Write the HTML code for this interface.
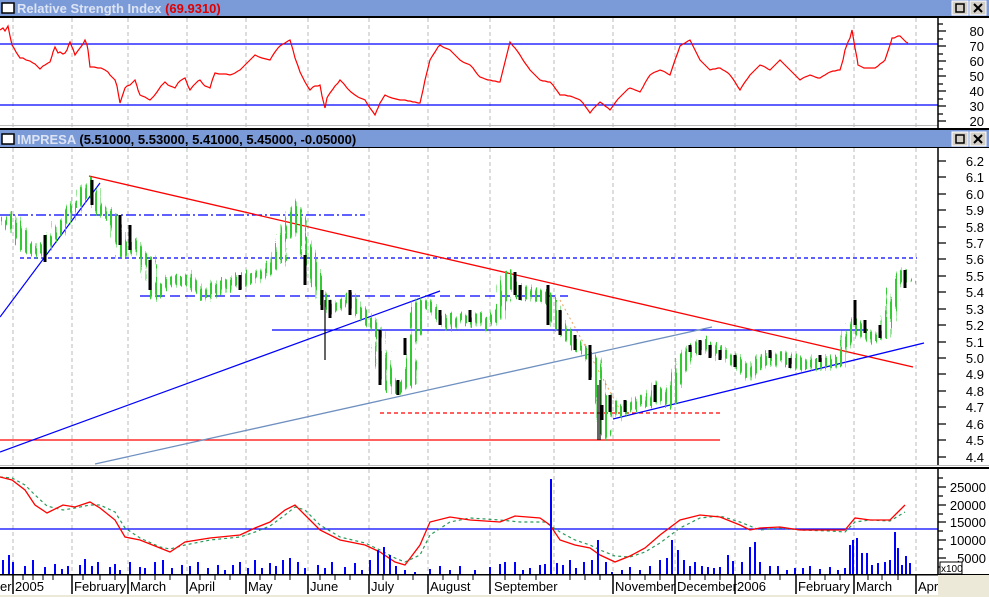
<!DOCTYPE html>
<html><head><meta charset="utf-8"><style>
html,body{margin:0;padding:0;background:#fff;}
body{width:989px;height:597px;overflow:hidden;position:relative;font-family:"Liberation Sans",sans-serif;}
svg{position:absolute;left:0;top:0;}
</style></head><body>
<svg width="989" height="597" viewBox="0 0 989 597" xmlns="http://www.w3.org/2000/svg" font-family="Liberation Sans, sans-serif">
<defs>
<pattern id="stripes" width="5" height="10" patternUnits="userSpaceOnUse"><rect x="0" y="0" width="2" height="10" fill="#fff"/></pattern>
<mask id="m"><rect x="0" y="148" width="938" height="317" fill="url(#stripes)"/></mask>
<filter id="jag" x="-5%" y="-20%" width="110%" height="140%">
<feTurbulence type="turbulence" baseFrequency="0.35 0.03" numOctaves="2" seed="3" result="t"/>
<feDisplacementMap in="SourceGraphic" in2="t" scale="14" xChannelSelector="B" yChannelSelector="R"/>
</filter>
</defs>
<rect x="0" y="0" width="989" height="597" fill="#fff"/>
<rect x="0" y="0" width="989" height="16" fill="#7b9ad8"/>
<rect x="2" y="3" width="12" height="10" fill="#fff" stroke="#000" stroke-width="1.5"/>
<text x="17" y="13" font-size="13" font-weight="bold" fill="#dce4f4">Relative Strength Index <tspan fill="#e00000">(69.9310)</tspan></text>
<rect x="0" y="128" width="989" height="2" fill="#000"/>
<rect x="0" y="130" width="989" height="17" fill="#7b9ad8"/>
<rect x="2" y="134" width="12" height="10" fill="#fff" stroke="#000" stroke-width="1.5"/>
<text x="17" y="144" font-size="13" font-weight="bold" fill="#dce4f4">IMPRESA <tspan fill="#000">(5.51000, 5.53000, 5.41000, 5.45000, -0.05000)</tspan></text>
<g>
<rect x="952" y="1" width="16" height="14" fill="#d4d0c8" stroke="#fff"/><rect x="956" y="4" width="8" height="8" fill="none" stroke="#000" stroke-width="1.5"/>
<rect x="970" y="1" width="16" height="14" fill="#d4d0c8" stroke="#fff"/><path d="M974 4 L982 12 M982 4 L974 12" stroke="#000" stroke-width="2"/>
<rect x="952" y="132" width="16" height="14" fill="#d4d0c8" stroke="#fff"/><rect x="956" y="135" width="8" height="8" fill="none" stroke="#000" stroke-width="1.5"/>
<rect x="970" y="132" width="16" height="14" fill="#d4d0c8" stroke="#fff"/><path d="M974 135 L982 143 M982 135 L974 143" stroke="#000" stroke-width="2"/>
</g>
<rect x="0" y="16" width="989" height="2" fill="#000"/>
<rect x="0" y="147" width="989" height="1" fill="#000"/>
<rect x="0" y="465" width="989" height="1" fill="#bbb"/>
<rect x="0" y="467" width="989" height="2" fill="#000"/>
<rect x="0" y="125" width="989" height="1" fill="#bbb"/>
<g stroke="#bbb" stroke-dasharray="4,3" stroke-width="1">
<path d="M13 18V128M72 18V128M128 18V128M187 18V128M246 18V128M308 18V128M369 18V128M428 18V128M490 18V128M554 18V128M613 18V128M675 18V128M735 18V128M796 18V128M854 18V128M916 18V128"/>
<path d="M13 148V465M72 148V465M128 148V465M187 148V465M246 148V465M308 148V465M369 148V465M428 148V465M490 148V465M554 148V465M613 148V465M675 148V465M735 148V465M796 148V465M854 148V465M916 148V465"/>
<path d="M13 469V574M72 469V574M128 469V574M187 469V574M246 469V574M308 469V574M369 469V574M428 469V574M490 469V574M554 469V574M613 469V574M675 469V574M735 469V574M796 469V574M854 469V574M916 469V574"/>
</g>
<path d="M0 44H938M0 105H938" stroke="#00f" stroke-width="1.3"/>
<polyline fill="none" stroke="#f00" stroke-width="1.2" points="0,30 3,28 5,31 8,26 10,36 12,45 14,48 16,52 18,55 20,58 23,58 26,60 30,61 33,63 35,64 37,66 40,69 43,66 45,65 48,63 50,62 52,56 53,52 55,47 57,51 58,53 60,52 63,54 65,53 67,50 69,44 70,42 72,47 73,49 75,55 77,52 80,48 83,44 85,40 87,45 88,50 90,67 94,67 98,68 101,68 105,70 108,72 110,75 113,78 115,80 117,86 118,92 120,103 122,97 123,94 125,88 127,86 130,85 133,82 135,80 137,86 138,90 140,95 142,96 145,97 148,99 150,100 154,96 157,92 161,86 165,82 168,85 170,86 173,87 175,88 178,83 180,81 183,79 185,78 187,83 188,86 190,90 193,86 195,84 198,81 200,80 203,84 205,86 208,87 210,88 212,81 213,78 215,73 219,74 222,74 226,74 230,75 233,74 235,73 238,71 240,70 244,66 248,62 252,58 255,55 259,57 262,58 266,59 270,60 273,55 275,52 278,48 280,46 283,44 285,43 288,41 290,40 293,50 295,58 298,66 300,72 303,78 305,82 308,87 310,90 313,87 315,86 318,86 320,85 322,96 325,108 327,98 328,96 330,93 333,89 335,86 338,83 340,80 344,84 347,88 351,92 355,95 358,97 360,98 363,99 365,100 368,105 370,108 373,112 375,115 377,110 378,108 380,103 382,100 383,98 385,95 389,97 392,98 396,99 400,100 403,100 405,100 408,101 410,101 413,102 415,102 418,103 420,103 423,90 425,80 428,68 430,60 433,55 435,52 438,47 440,45 443,47 445,48 448,49 450,50 453,53 455,55 458,58 460,60 463,62 465,63 468,64 470,65 473,68 475,71 478,75 480,77 483,78 485,79 488,80 490,80 493,81 495,81 498,82 500,82 503,70 505,62 508,50 510,42 513,46 515,48 518,52 520,55 523,60 525,63 528,67 530,70 533,73 535,75 538,78 540,80 543,81 545,81 548,82 550,82 553,85 555,88 558,92 560,95 563,95 565,95 568,96 570,96 573,97 575,98 578,99 580,100 583,103 585,106 588,110 590,113 593,109 595,107 598,104 600,102 603,104 605,106 608,108 610,110 613,106 615,103 618,99 620,97 623,94 625,92 628,89 630,88 633,89 635,90 638,91 640,92 643,87 645,83 648,78 650,75 653,73 655,72 658,71 660,70 663,71 665,72 668,74 670,75 673,66 675,60 678,52 680,46 683,44 685,43 688,41 690,40 693,46 695,50 698,56 700,60 703,63 705,65 708,68 710,70 713,69 715,69 718,68 720,68 723,70 725,71 728,73 730,75 733,79 735,82 738,87 740,90 743,85 745,82 748,78 750,75 753,72 755,70 758,67 760,65 763,66 765,67 768,69 770,70 773,67 775,65 778,62 780,60 783,63 785,65 788,68 790,70 793,73 795,75 798,78 800,80 803,78 805,77 808,76 810,75 813,76 815,77 818,78 820,78 823,76 825,75 828,73 830,72 833,71 835,71 838,70 840,70 843,60 845,50 848,42 850,38 852,30 854,42 855,48 857,58 858,65 860,66 862,67 864,68 865,68 868,68 870,68 873,68 875,68 878,66 880,64 883,62 885,60 887,54 889,48 891,42 892,38 894,38 896,37 898,36 900,36 902,38 904,40 906,42 908,43"/>
<path d="M20 258H917" stroke="#00f" stroke-width="1.2" stroke-dasharray="4,3"/>
<path d="M0 215H365" stroke="#00f" stroke-width="1.2" stroke-dasharray="10,3,2,3"/>
<path d="M140 296H568" stroke="#00f" stroke-width="1.2" stroke-dasharray="10,5"/>
<path d="M272 330H868" stroke="#00f" stroke-width="1.3"/>
<path d="M0 440H720" stroke="#f00" stroke-width="1.3"/>
<path d="M380 413H720" stroke="#f00" stroke-width="1.2" stroke-dasharray="4,3"/>
<path d="M89 176L913 367" stroke="#f00" stroke-width="1.3"/>
<path d="M0 317L100 183" stroke="#00f" stroke-width="1.2"/>
<path d="M0 452L440 291" stroke="#00f" stroke-width="1.2"/>
<path d="M95 464L712 327" stroke="#6f90c0" stroke-width="1.3"/>
<path d="M613 419L924 343" stroke="#00f" stroke-width="1.3"/>
<path d="M560 300L620 410" stroke="#f0a060" stroke-width="1" stroke-dasharray="2,3"/>
<g mask="url(#m)">
<polyline filter="url(#jag)" fill="none" stroke="#3c3" stroke-width="11" stroke-linejoin="round" points="0,225 10,215 20,240 35,250 50,235 70,205 88,180 95,205 110,215 120,250 130,240 145,255 150,290 165,280 185,275 200,290 215,285 230,280 245,275 260,270 275,255 285,225 292,205 300,240 310,265 320,300 330,305 345,295 360,310 375,330 385,380 395,385 405,380 410,340 415,300 425,300 435,310 445,320 460,315 480,320 495,310 505,270 515,290 530,290 545,295 555,320 570,340 590,355 595,380 600,430 605,395 615,410 630,400 645,400 655,385 665,400 680,355 700,340 715,350 730,355 745,370 760,355 780,355 800,360 820,360 840,355 850,320 860,330 870,335 880,330 890,300 895,280 900,270 905,280"/>
</g>
<g stroke="#000" stroke-width="3">
<path d="M45 235V262M92 180V205M120 215V245M130 225V250M150 260V290M305 255V285M322 290V310M350 290V315M380 330V385M398 380V395M405 338V355M515 272V295M548 285V325M560 310V335M575 335V350M590 345V380M602 405V420M610 395V412M655 385V402M700 340V355M710 345V358M735 355V367M770 350V358M855 300V325M865 320V333M880 325V338M905 270V288M240 275V290M330 300V318M440 310V325M470 310V322M520 285V300M625 400V412M690 345V352M720 350V360M790 358V368M820 355V362"/>
</g>
<g stroke="#000" stroke-width="1.2"><path d="M600 380V440M325 300V360M598 385V440"/></g>
<path d="M0 529H938" stroke="#00f" stroke-width="1.3"/>
<polyline fill="none" stroke="#2a9a5a" stroke-width="1.2" stroke-dasharray="3,3" points="0,477 12,478 25,485 35,495 47,506 63,510 75,508 90,505 100,505 115,512 125,528 140,538 160,547 170,549 185,545 210,540 240,537 255,532 270,526 285,515 295,507 305,510 320,525 340,537 365,543 380,550 395,558 405,562 420,555 430,535 450,522 470,518 500,520 520,522 545,522 560,532 575,540 590,545 600,550 615,556 630,557 645,552 660,543 680,528 700,518 720,516 740,522 750,526 760,530 780,528 800,530 830,531 845,532 855,522 870,520 890,521 900,515 905,512"/>
<polyline fill="none" stroke="#f00" stroke-width="1.3" points="0,477 12,480 25,490 35,505 47,513 63,505 75,507 90,502 100,508 115,520 125,537 140,540 160,548 170,552 185,542 210,538 240,535 255,528 270,522 285,510 295,505 305,515 320,530 340,540 365,545 380,552 395,562 405,565 420,545 430,522 450,517 470,520 500,522 515,516 540,518 550,525 560,540 575,545 590,548 600,555 615,562 630,556 645,548 660,535 680,520 700,515 720,517 740,525 750,530 760,528 780,527 800,530 830,530 845,530 855,518 870,520 890,520 900,510 905,505"/>
<path stroke="#00f" stroke-width="2" d="M3 574V560M9 574V555M13 574V562M25 574V566M33 574V560M45 574V567M55 574V564M62 574V569M68 574V566M80 574V565M85 574V559M92 574V566M98 574V562M110 574V567M115 574V564M120 574V570M130 574V562M140 574V567M145 574V568M155 574V562M163 574V560M172 574V568M182 574V565M190 574V566M198 574V562M208 574V568M218 574V565M225 574V570M233 574V565M240 574V562M248 574V568M255 574V560M262 574V568M270 574V563M276 574V566M283 574V560M290 574V558M298 574V562M305 574V568M318 574V565M325 574V568M332 574V562M345 574V567M355 574V563M362 574V570M370 574V560M378 574V550M384 574V547M390 574V555M396 574V566M405 574V570M415 574V572M430 574V569M440 574V566M450 574V570M460 574V566M475 574V570M490 574V567M500 574V564M505 574V562M515 574V562M523 574V570M530 574V568M540 574V565M545 574V564M551 574V479M557 574V563M563 574V565M570 574V560M576 574V568M584 574V562M592 574V560M598 574V540M606 574V562M612 574V572M622 574V570M630 574V567M640 574V570M650 574V566M660 574V560M667 574V558M672 574V540M678 574V550M684 574V560M690 574V566M695 574V562M702 574V566M708 574V567M714 574V568M720 574V567M728 574V555M733 574V561M742 574V562M750 574V547M755 574V542M760 574V562M770 574V566M778 574V566M787 574V570M795 574V568M803 574V568M810 574V566M820 574V569M830 574V567M838 574V570M845 574V568M850 574V545M853 574V540M857 574V538M862 574V553M867 574V553M872 574V565M878 574V563M885 574V562M890 574V560M895 574V532M898 574V548M902 574V565M906 574V556M910 574V563"/>
<rect x="938" y="18" width="51" height="110" fill="#fff"/>
<rect x="938" y="148" width="51" height="317" fill="#fff"/>
<rect x="938" y="469" width="51" height="105" fill="#fff"/>
<path d="M938 18V128M938 148V465M938 469V574" stroke="#000" stroke-width="1.5"/>
<g stroke="#000" stroke-width="1.2">
<path d="M938 31H946M938 46H946M938 61H946M938 76H946M938 91H946M938 106H946M938 121H946M938 24H943M938 39H943M938 54H943M938 69H943M938 84H943M938 99H943M938 114H943"/>
<path d="M938 161H946M938 177H946M938 194H946M938 210H946M938 227H946M938 243H946M938 259H946M938 276H946M938 292H946M938 309H946M938 325H946M938 342H946M938 358H946M938 374H946M938 391H946M938 407H946M938 424H946M938 440H946M938 457H946"/>
<path d="M938 487H946M938 505H946M938 522H946M938 540H946M938 558H946M938 478H943M938 496H943M938 514H943M938 531H943M938 549H943M938 567H943"/>
</g>
<g font-size="13" fill="#000" text-anchor="end">
<text x="984" y="36">80</text><text x="984" y="51">70</text><text x="984" y="66">60</text><text x="984" y="81">50</text><text x="984" y="96">40</text><text x="984" y="111">30</text><text x="984" y="126">20</text>
<text x="984" y="166">6.2</text><text x="984" y="182">6.1</text><text x="984" y="199">6.0</text><text x="984" y="215">5.9</text><text x="984" y="232">5.8</text><text x="984" y="248">5.7</text><text x="984" y="264">5.6</text><text x="984" y="281">5.5</text><text x="984" y="297">5.4</text><text x="984" y="314">5.3</text><text x="984" y="330">5.2</text><text x="984" y="347">5.1</text><text x="984" y="363">5.0</text><text x="984" y="379">4.9</text><text x="984" y="396">4.8</text><text x="984" y="412">4.7</text><text x="984" y="429">4.6</text><text x="984" y="445">4.5</text><text x="984" y="462">4.4</text>
<text x="986" y="492">25000</text><text x="986" y="510">20000</text><text x="986" y="527">15000</text><text x="986" y="545">10000</text><text x="986" y="563">5000</text>
</g>
<rect x="940" y="562" width="22" height="12" fill="#fff" stroke="#000"/>
<text x="941" y="572" font-size="10">x100</text>
<rect x="0" y="574" width="989" height="1.5" fill="#000"/>
<rect x="938" y="575" width="51" height="22" fill="#ece9d8"/>
<rect x="0" y="595" width="938" height="2" fill="#ece9d8"/>
<path stroke="#000" stroke-width="1.5" d="M13 575V594M72 575V594M128 575V594M187 575V594M246 575V594M308 575V594M369 575V594M428 575V594M490 575V594M613 575V594M675 575V594M735 575V594M796 575V594M854 575V594M916 575V594"/>
<path stroke="#000" stroke-width="1" d="M23 575V580M33 575V580M43 575V580M53 575V580M83 575V580M100 575V580M115 575V580M140 575V580M155 575V580M170 575V580M200 575V580M215 575V580M230 575V580M260 575V580M275 575V580M290 575V580M320 575V580M335 575V580M350 575V580M383 575V580M398 575V580M413 575V580M443 575V580M458 575V580M473 575V580M505 575V580M520 575V580M536 575V580M570 575V580M585 575V580M600 575V580M630 575V580M645 575V580M660 575V580M690 575V580M705 575V580M720 575V580M750 575V580M765 575V580M780 575V580M810 575V580M825 575V580M840 575V580M868 575V580M882 575V580M898 575V580"/>
<g font-size="13" fill="#000">
<text x="0" y="591">er</text><text x="15" y="591">2005</text><text x="74" y="591">February</text><text x="130" y="591">March</text><text x="189" y="591">April</text><text x="248" y="591">May</text><text x="310" y="591">June</text><text x="371" y="591">July</text><text x="430" y="591">August</text><text x="494" y="591">September</text><text x="615" y="591">November</text><text x="677" y="591">December</text><text x="737" y="591">2006</text><text x="798" y="591">February</text><text x="856" y="591">March</text><text x="918" y="591">Apr</text>
</g>
</svg>
</body></html>
